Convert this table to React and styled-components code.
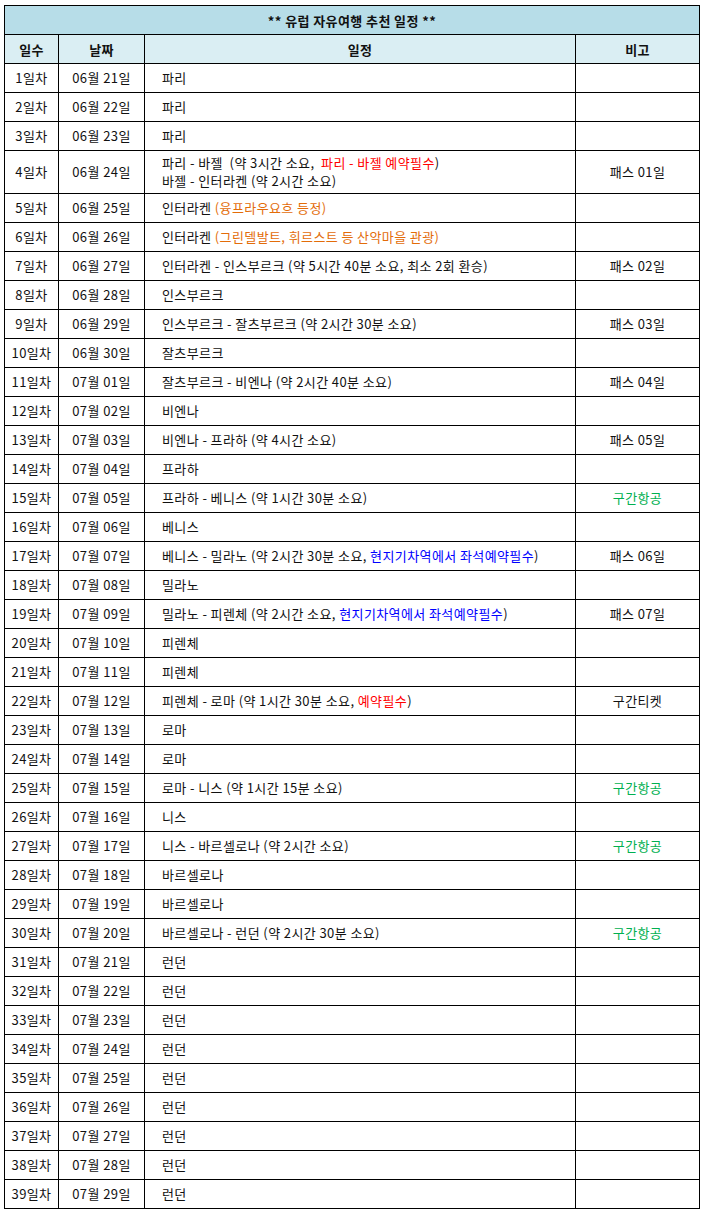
import React from "react";
import styled, { createGlobalStyle } from "styled-components";

const Global = createGlobalStyle`
  html, body { margin: 0; padding: 0; background: #fff; }
  body { font-family: "Noto Sans CJK KR", "Noto Sans", sans-serif; }
`;

const Page = styled.div`
  padding: 5px 0 0 4px;
`;

const Table = styled.table`
  border-collapse: collapse;
  table-layout: fixed;
  width: 696px;
  font-size: 13px;
  letter-spacing: 0.4px;
  color: #111;
`;

const Cell = styled.td`
  border: 1px solid #000;
  height: ${(p) => (p.$tall ? 42 : 28)}px;
  padding: 0;
  line-height: 18px;
  text-align: ${(p) => (p.$left ? "left" : "center")};
  padding-left: ${(p) => (p.$left ? "17px" : "0")};
  white-space: pre;
  vertical-align: middle;
`;

const Line = styled.div`
  display: block;
`;

const TitleCell = styled.th`
  border: 1px solid #000;
  height: 28px;
  padding: 0;
  background: #b7dde8;
  font-weight: bold;
  text-align: center;
`;

const HeadCell = styled.th`
  border: 1px solid #000;
  height: 28px;
  padding: 0;
  background: #daeef3;
  font-weight: bold;
  text-align: center;
`;

const Note = styled.span`
  color: ${(p) =>
    p.$tone === "red"
      ? "#ff0000"
      : p.$tone === "orange"
      ? "#e36c09"
      : p.$tone === "blue"
      ? "#0000ff"
      : p.$tone === "green"
      ? "#00b050"
      : "inherit"};
`;

const rows = [
  ["06월 21일", [["파리"]], ""],
  ["06월 22일", [["파리"]], ""],
  ["06월 23일", [["파리"]], ""],
  [
    "06월 24일",
    [
      ["파리 - 바젤  (약 3시간 소요,  ", { t: "파리 - 바젤 예약필수", c: "red" }, ")"],
      ["바젤 - 인터라켄 (약 2시간 소요)"],
    ],
    "패스 01일",
    true,
  ],
  ["06월 25일", [["인터라켄 ", { t: "(융프라우요흐 등정)", c: "orange" }]], ""],
  ["06월 26일", [["인터라켄 ", { t: "(그린델발트, 휘르스트 등 산악마을 관광)", c: "orange" }]], ""],
  ["06월 27일", [["인터라켄 - 인스부르크 (약 5시간 40분 소요, 최소 2회 환승)"]], "패스 02일"],
  ["06월 28일", [["인스부르크"]], ""],
  ["06월 29일", [["인스부르크 - 잘츠부르크 (약 2시간 30분 소요)"]], "패스 03일"],
  ["06월 30일", [["잘츠부르크"]], ""],
  ["07월 01일", [["잘츠부르크 - 비엔나 (약 2시간 40분 소요)"]], "패스 04일"],
  ["07월 02일", [["비엔나"]], ""],
  ["07월 03일", [["비엔나 - 프라하 (약 4시간 소요)"]], "패스 05일"],
  ["07월 04일", [["프라하"]], ""],
  ["07월 05일", [["프라하 - 베니스 (약 1시간 30분 소요)"]], "G"],
  ["07월 06일", [["베니스"]], ""],
  ["07월 07일", [["베니스 - 밀라노 (약 2시간 30분 소요, ", { t: "현지기차역에서 좌석예약필수", c: "blue" }, ")"]], "패스 06일"],
  ["07월 08일", [["밀라노"]], ""],
  ["07월 09일", [["밀라노 - 피렌체 (약 2시간 소요, ", { t: "현지기차역에서 좌석예약필수", c: "blue" }, ")"]], "패스 07일"],
  ["07월 10일", [["피렌체"]], ""],
  ["07월 11일", [["피렌체"]], ""],
  ["07월 12일", [["피렌체 - 로마 (약 1시간 30분 소요, ", { t: "예약필수", c: "red" }, ")"]], "구간티켓"],
  ["07월 13일", [["로마"]], ""],
  ["07월 14일", [["로마"]], ""],
  ["07월 15일", [["로마 - 니스 (약 1시간 15분 소요)"]], "G"],
  ["07월 16일", [["니스"]], ""],
  ["07월 17일", [["니스 - 바르셀로나 (약 2시간 소요)"]], "G"],
  ["07월 18일", [["바르셀로나"]], ""],
  ["07월 19일", [["바르셀로나"]], ""],
  ["07월 20일", [["바르셀로나 - 런던 (약 2시간 30분 소요)"]], "G"],
  ["07월 21일", [["런던"]], ""],
  ["07월 22일", [["런던"]], ""],
  ["07월 23일", [["런던"]], ""],
  ["07월 24일", [["런던"]], ""],
  ["07월 25일", [["런던"]], ""],
  ["07월 26일", [["런던"]], ""],
  ["07월 27일", [["런던"]], ""],
  ["07월 28일", [["런던"]], ""],
  ["07월 29일", [["런던"]], ""],
];

export default function App() {
  return (
    <Page>
      <Global />
      <Table>
        <colgroup>
          <col style={{ width: 54 }} />
          <col style={{ width: 86 }} />
          <col style={{ width: 431 }} />
          <col style={{ width: 124 }} />
        </colgroup>
        <thead>
          <tr>
            <TitleCell colSpan={4}>** 유럽 자유여행 추천 일정 **</TitleCell>
          </tr>
          <tr>
            <HeadCell>일수</HeadCell>
            <HeadCell>날짜</HeadCell>
            <HeadCell>일정</HeadCell>
            <HeadCell>비고</HeadCell>
          </tr>
        </thead>
        <tbody>
          {rows.map(([date, lines, note, tall], i) => (
            <tr key={i}>
              <Cell $tall={tall}>{i + 1}일차</Cell>
              <Cell $tall={tall}>{date}</Cell>
              <Cell $tall={tall} $left>
                {lines.map((parts, k) => (
                  <Line key={k}>
                    {parts.map((p, j) =>
                      typeof p === "string" ? (
                        <React.Fragment key={j}>{p}</React.Fragment>
                      ) : (
                        <Note key={j} $tone={p.c}>
                          {p.t}
                        </Note>
                      )
                    )}
                  </Line>
                ))}
              </Cell>
              <Cell $tall={tall}>
                {note === "G" ? <Note $tone="green">구간항공</Note> : note}
              </Cell>
            </tr>
          ))}
        </tbody>
      </Table>
    </Page>
  );
}
